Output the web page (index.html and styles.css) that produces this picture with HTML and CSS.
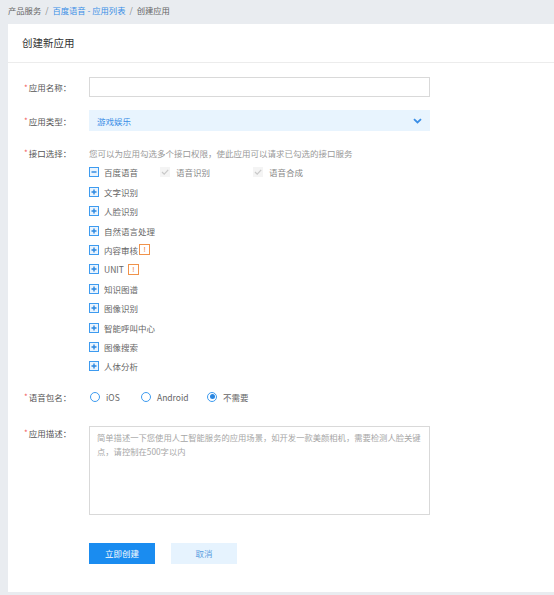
FILE: index.html
```html
<!DOCTYPE html>
<html lang="zh-CN">
<head>
<meta charset="utf-8">
<title>创建新应用</title>
<link rel="stylesheet" href="styles.css">
</head>
<body>
<div class="breadcrumb">
  <span>产品服务</span><span class="sep">/</span><a class="crumb-link">百度语音 - 应用列表</a><span class="sep">/</span><span>创建应用</span>
</div>
<div class="card">
  <div class="card-header">创建新应用</div>
  <div class="form">
    <div class="row row-name">
      <div class="label"><span class="star">*</span>应用名称：</div>
      <div class="control"><div class="input"></div></div>
    </div>
    <div class="row row-type">
      <div class="label"><span class="star">*</span>应用类型：</div>
      <div class="control">
        <div class="select">
          <span>游戏娱乐</span>
          <svg class="chev" width="9" height="6" viewBox="0 0 9 6"><path d="M1 1.2 L4.5 4.5 L8 1.2" fill="none" stroke="#3a8ee6" stroke-width="1.8"/></svg>
        </div>
      </div>
    </div>
    <div class="row row-api">
      <div class="label line"><span class="star">*</span>接口选择：</div>
      <div class="control">
        <div class="line hint">您可以为应用勾选多个接口权限，使此应用可以请求已勾选的接口服务</div>
        <div class="line">
          <svg class="exp" width="10" height="10" viewBox="0 0 10 10"><rect x="0.5" y="0.5" width="9" height="9" fill="#eaf4fe" stroke="#3d9bf0"/><path d="M2.5 5 H7.5" stroke="#2a86e0" stroke-width="1.4"/></svg>
          <span class="item-text">百度语音</span>
          <span class="sub"><span class="chk"><svg width="10" height="10" viewBox="0 0 10 10"><path d="M2 5 L4.2 7.2 L8.2 2.8" fill="none" stroke="#c9c9c9" stroke-width="1.2"/></svg></span><span class="sub-text">语音识别</span></span>
          <span class="sub"><span class="chk"><svg width="10" height="10" viewBox="0 0 10 10"><path d="M2 5 L4.2 7.2 L8.2 2.8" fill="none" stroke="#c9c9c9" stroke-width="1.2"/></svg></span><span class="sub-text">语音合成</span></span>
        </div>
        <div class="line"><svg class="exp" width="10" height="10" viewBox="0 0 10 10"><rect x="0.5" y="0.5" width="9" height="9" fill="#eaf4fe" stroke="#3d9bf0"/><path d="M2.5 5 H7.5 M5 2.5 V7.5" stroke="#2a86e0" stroke-width="1.4"/></svg><span class="item-text">文字识别</span></div>
        <div class="line"><svg class="exp" width="10" height="10" viewBox="0 0 10 10"><rect x="0.5" y="0.5" width="9" height="9" fill="#eaf4fe" stroke="#3d9bf0"/><path d="M2.5 5 H7.5 M5 2.5 V7.5" stroke="#2a86e0" stroke-width="1.4"/></svg><span class="item-text">人脸识别</span></div>
        <div class="line"><svg class="exp" width="10" height="10" viewBox="0 0 10 10"><rect x="0.5" y="0.5" width="9" height="9" fill="#eaf4fe" stroke="#3d9bf0"/><path d="M2.5 5 H7.5 M5 2.5 V7.5" stroke="#2a86e0" stroke-width="1.4"/></svg><span class="item-text">自然语言处理</span></div>
        <div class="line"><svg class="exp" width="10" height="10" viewBox="0 0 10 10"><rect x="0.5" y="0.5" width="9" height="9" fill="#eaf4fe" stroke="#3d9bf0"/><path d="M2.5 5 H7.5 M5 2.5 V7.5" stroke="#2a86e0" stroke-width="1.4"/></svg><span class="item-text">内容审核</span><span class="warn">!</span></div>
        <div class="line"><svg class="exp" width="10" height="10" viewBox="0 0 10 10"><rect x="0.5" y="0.5" width="9" height="9" fill="#eaf4fe" stroke="#3d9bf0"/><path d="M2.5 5 H7.5 M5 2.5 V7.5" stroke="#2a86e0" stroke-width="1.4"/></svg><span class="item-text">UNIT</span><span class="warn warn-gap">!</span></div>
        <div class="line"><svg class="exp" width="10" height="10" viewBox="0 0 10 10"><rect x="0.5" y="0.5" width="9" height="9" fill="#eaf4fe" stroke="#3d9bf0"/><path d="M2.5 5 H7.5 M5 2.5 V7.5" stroke="#2a86e0" stroke-width="1.4"/></svg><span class="item-text">知识图谱</span></div>
        <div class="line"><svg class="exp" width="10" height="10" viewBox="0 0 10 10"><rect x="0.5" y="0.5" width="9" height="9" fill="#eaf4fe" stroke="#3d9bf0"/><path d="M2.5 5 H7.5 M5 2.5 V7.5" stroke="#2a86e0" stroke-width="1.4"/></svg><span class="item-text">图像识别</span></div>
        <div class="line"><svg class="exp" width="10" height="10" viewBox="0 0 10 10"><rect x="0.5" y="0.5" width="9" height="9" fill="#eaf4fe" stroke="#3d9bf0"/><path d="M2.5 5 H7.5 M5 2.5 V7.5" stroke="#2a86e0" stroke-width="1.4"/></svg><span class="item-text">智能呼叫中心</span></div>
        <div class="line"><svg class="exp" width="10" height="10" viewBox="0 0 10 10"><rect x="0.5" y="0.5" width="9" height="9" fill="#eaf4fe" stroke="#3d9bf0"/><path d="M2.5 5 H7.5 M5 2.5 V7.5" stroke="#2a86e0" stroke-width="1.4"/></svg><span class="item-text">图像搜索</span></div>
        <div class="line"><svg class="exp" width="10" height="10" viewBox="0 0 10 10"><rect x="0.5" y="0.5" width="9" height="9" fill="#eaf4fe" stroke="#3d9bf0"/><path d="M2.5 5 H7.5 M5 2.5 V7.5" stroke="#2a86e0" stroke-width="1.4"/></svg><span class="item-text">人体分析</span></div>
      </div>
    </div>
    <div class="row row-radio">
      <div class="label"><span class="star">*</span>语音包名：</div>
      <div class="control radios">
        <span class="radio radio-ios"><span class="circle"></span><span class="radio-text">iOS</span></span>
        <span class="radio radio-android"><span class="circle"></span><span class="radio-text">Android</span></span>
        <span class="radio"><span class="circle checked"></span><span class="radio-text">不需要</span></span>
      </div>
    </div>
    <div class="row row-desc">
      <div class="label label-top"><span class="star">*</span>应用描述：</div>
      <div class="control">
        <textarea class="textarea" placeholder="简单描述一下您使用人工智能服务的应用场景，如开发一款美颜相机，需要检测人脸关键点，请控制在500字以内"></textarea>
      </div>
    </div>
    <div class="row row-buttons">
      <div class="label"></div>
      <div class="control buttons">
        <button class="btn btn-primary">立即创建</button>
        <button class="btn btn-cancel">取消</button>
      </div>
    </div>
  </div>
</div>
</body>
</html>
```

FILE: styles.css
```css
* { box-sizing: border-box; }
html, body { margin: 0; padding: 0; }
body {
  background: #e9ecf0;
  font-family: "Noto Sans CJK SC", "Noto Sans", sans-serif;
  font-size: 8.5px;
  color: #555;
  width: 554px;
  height: 595px;
  overflow: hidden;
}
.breadcrumb {
  height: 24px;
  line-height: 20px;
  padding-left: 8px;
  color: #666;
  font-size: 8.3px;
}
.sep { margin: 0 4px; color: #888; }
.crumb-link { color: #3a8ee6; }
.card {
  margin-left: 8px;
  background: #fff;
  padding-bottom: 28px;
}
.card-header {
  height: 39px;
  line-height: 38px;
  padding-left: 14px;
  font-size: 10.5px;
  color: #333;
  border-bottom: 1px solid #ececec;
}
.form { padding-top: 14px; }
.row { display: flex; }
.label {
  width: 81px;
  flex: none;
  padding-left: 16px;
  color: #555;
  display: flex;
  align-items: center;
}
.star { color: #f25b5b; margin-right: 1px; font-size: 8px; }
.control { flex: none; width: 341px; }
.row-name { height: 20px; }
.input {
  height: 20px;
  border: 1px solid #d9d9d9;
  background: #fff;
}
.row-type { margin-top: 13px; height: 21px; }
.select {
  height: 21px;
  background: #e8f4fe;
  color: #3a8ee6;
  display: flex;
  align-items: center;
  justify-content: space-between;
  padding: 0 8px 0 8px;
}
.chev { display: block; }
.row-api { margin-top: 12.3px; }
.line {
  height: 19.4px;
  display: flex;
  align-items: center;
}
.label.line { align-self: flex-start; }
.hint { color: #999; }
.exp { flex: none; display: block; }
.item-text { margin-left: 5px; color: #666; }
.sub { display: inline-flex; align-items: center; margin-left: 22px; width: 93px; }
.sub + .sub { margin-left: 0; }
.chk {
  width: 10px; height: 10px;
  background: #f4f4f4;
  display: block;
}
.chk svg { display: block; }
.sub-text { margin-left: 6px; color: #888; }
.warn {
  width: 11px; height: 11px;
  border: 1px solid #f0924a;
  color: #f0803a;
  font-size: 8px;
  line-height: 9px;
  text-align: center;
  margin-left: 1px;
  font-family: "Liberation Sans", sans-serif;
}
.warn-gap { margin-left: 4px; }
.row-radio { margin-top: 10.9px; height: 20px; }
.radios { display: flex; align-items: center; }
.radio { display: inline-flex; align-items: center; }
.radio-ios { width: 51px; }
.radio-android { width: 66px; }
.circle {
  width: 10px; height: 10px;
  border: 1px solid #3d9bf0;
  border-radius: 50%;
  background: #fff;
  margin-left: 1px;
  display: flex; align-items: center; justify-content: center;
}
.circle.checked::after {
  content: "";
  width: 5px; height: 5px;
  background: #2a86e0;
  border-radius: 50%;
}
.radio-text { margin-left: 6px; color: #666; }
.row-desc { margin-top: 19px; }
.label-top { align-self: flex-start; height: 14px; margin-top: 0; }
.textarea {
  display: block;
  width: 341px;
  height: 89px;
  border: 1px solid #d9d9d9;
  padding: 3px 0 3px 7px;
  font-family: "Noto Sans CJK SC", "Noto Sans", sans-serif;
  font-size: 8.3px;
  line-height: 14.3px;
  resize: none;
  outline: none;
  overflow: hidden;
  margin: 0;
}
.textarea::placeholder { color: #a6a6a6; }
.row-buttons { margin-top: 28px; }
.buttons { display: flex; gap: 16px; }
.btn {
  width: 66px;
  height: 21px;
  border: none;
  font-family: "Noto Sans CJK SC", "Noto Sans", sans-serif;
  font-size: 8.5px;
  padding: 0;
  margin: 0;
}
.btn-primary { background: #1a8cf0; color: #fff; }
.btn-cancel { background: #e6f3fe; color: #5a9de0; }
```
